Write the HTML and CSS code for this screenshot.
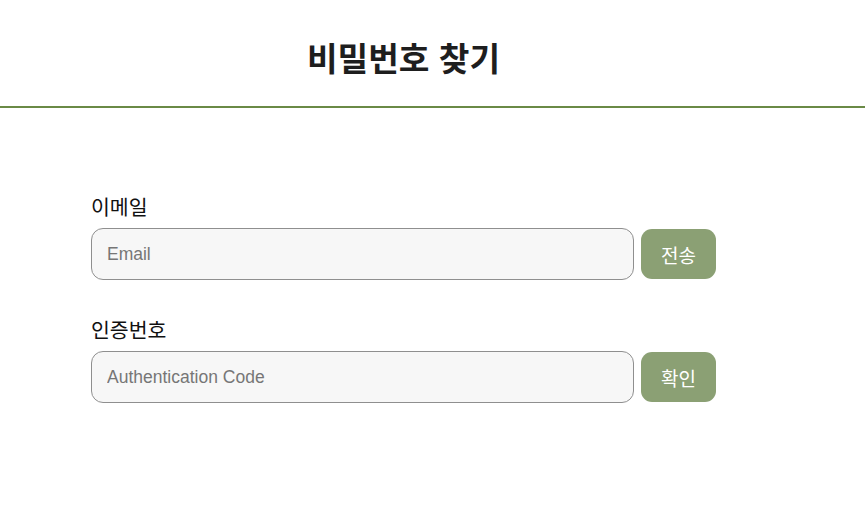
FILE: index.html
```html
<!DOCTYPE html>
<html lang="ko">
<head>
<meta charset="utf-8">
<title>비밀번호 찾기</title>
<link rel="stylesheet" href="styles.css">
</head>
<body>
<header class="header">
  <div class="header-inner">
    <h1 class="title">비밀번호 찾기</h1>
  </div>
</header>
<main class="form">
  <div class="field">
    <label class="label" for="email">이메일</label>
    <div class="row">
      <input class="input" id="email" type="text" placeholder="Email">
      <button class="btn" type="button">전송</button>
    </div>
  </div>
  <div class="field">
    <label class="label" for="code">인증번호</label>
    <div class="row">
      <input class="input" id="code" type="text" placeholder="Authentication Code">
      <button class="btn" type="button">확인</button>
    </div>
  </div>
</main>
</body>
</html>
```
FILE: styles.css
```css
* { box-sizing: border-box; }
body {
  margin: 0;
  background: #fff;
  font-family: "Noto Sans CJK KR", "Noto Sans", sans-serif;
  color: #111;
}
.header {
  border-bottom: 2px solid #6a8a46;
  height: 108px;
}
.header-inner {
  width: 625px;
  margin-left: 91px;
  display: flex;
  justify-content: center;
  padding-top: 34px;
}
.title {
  margin: 0;
  font-size: 33.3px;
  font-weight: 700;
  line-height: 46px;
  color: #1e1e1e;
}
.form {
  width: 625px;
  margin-left: 91px;
  padding-top: 83px;
  display: flex;
  flex-direction: column;
  gap: 34px;
}
.field {
  display: flex;
  flex-direction: column;
  gap: 7px;
}
.label {
  font-size: 20.5px;
  line-height: 30px;
  color: #111;
}
.row {
  display: flex;
  align-items: center;
  gap: 7px;
}
.input {
  flex: 1;
  height: 52px;
  border: 1px solid #8f8f8f;
  border-radius: 12px;
  background: #f7f7f7;
  padding: 0 15px;
  font-family: "Liberation Sans", Arial, sans-serif;
  font-size: 17.5px;
  color: #333;
  outline: none;
}
.input::placeholder { color: #767676; }
.btn {
  width: 75px;
  height: 50px;
  border: none;
  border-radius: 11px;
  background: #8ba074;
  color: #fff;
  font-family: "Noto Sans CJK KR", sans-serif;
  font-size: 19px;
  padding: 0;
}
```
